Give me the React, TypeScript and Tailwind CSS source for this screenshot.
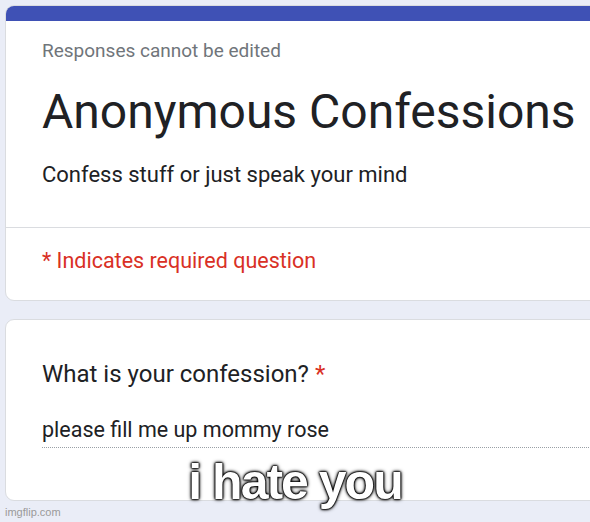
export default function App() {
  return (
    <div className="relative h-[522px] w-[590px] overflow-hidden bg-[#eaedf7] font-['Roboto',sans-serif]">
      <div className="flex w-[640px] flex-col gap-[18px] pl-[5px] pt-[5px]">
        {/* Header card */}
        <div className="overflow-hidden rounded-[9px] border border-[#dadce0] bg-white">
          <div className="h-[15px] bg-[#3f51b5]"></div>
          <div className="px-[36px] pt-[18px] pb-[38px]">
            <p className="text-[19px] leading-[24px] text-[#70757a]">Responses cannot be edited</p>
            <h1 className="mt-[21px] text-[48px] leading-[56px] text-[#202124]">Anonymous Confessions</h1>
            <p className="mt-[21px] text-[22px] leading-[28px] text-[#202124]">Confess stuff or just speak your mind</p>
          </div>
          <div className="border-t border-[#dadce0] px-[36px] pt-[19px] pb-[25px]">
            <p className="text-[21.5px] leading-[28px] text-[#d93025]">* Indicates required question</p>
          </div>
        </div>

        {/* Question card */}
        <div className="h-[182px] rounded-[9px] border border-[#dadce0] bg-white px-[36px] pt-[40px]">
          <p className="text-[24px] leading-[28px] text-[#202124]">
            What is your confession? <span className="text-[#d93025]">*</span>
          </p>
          <div className="mt-[30px] border-b border-dotted border-[#9aa0a6] pb-[5px]">
            <p className="text-[21.5px] leading-[24px] text-[#202124]">please fill me up mommy rose</p>
          </div>
        </div>
      </div>

      {/* Meme caption */}
      <div className="absolute left-0 right-0 top-[452px] text-center font-['Liberation_Sans',Arial,sans-serif] text-[50px] font-bold leading-[60px] tracking-[-2px] text-white [text-shadow:0_0_4px_#000,0_0_3px_#000,0_0_2px_#000,0_0_2px_#000,0_0_1px_#000,0_0_1px_#000]">
        i hate you
      </div>

      <p className="absolute bottom-[3px] left-[5px] font-['Liberation_Sans',Arial,sans-serif] text-[11px] leading-[14px] text-[#9a9a9a]">
        imgflip.com
      </p>
    </div>
  );
}
